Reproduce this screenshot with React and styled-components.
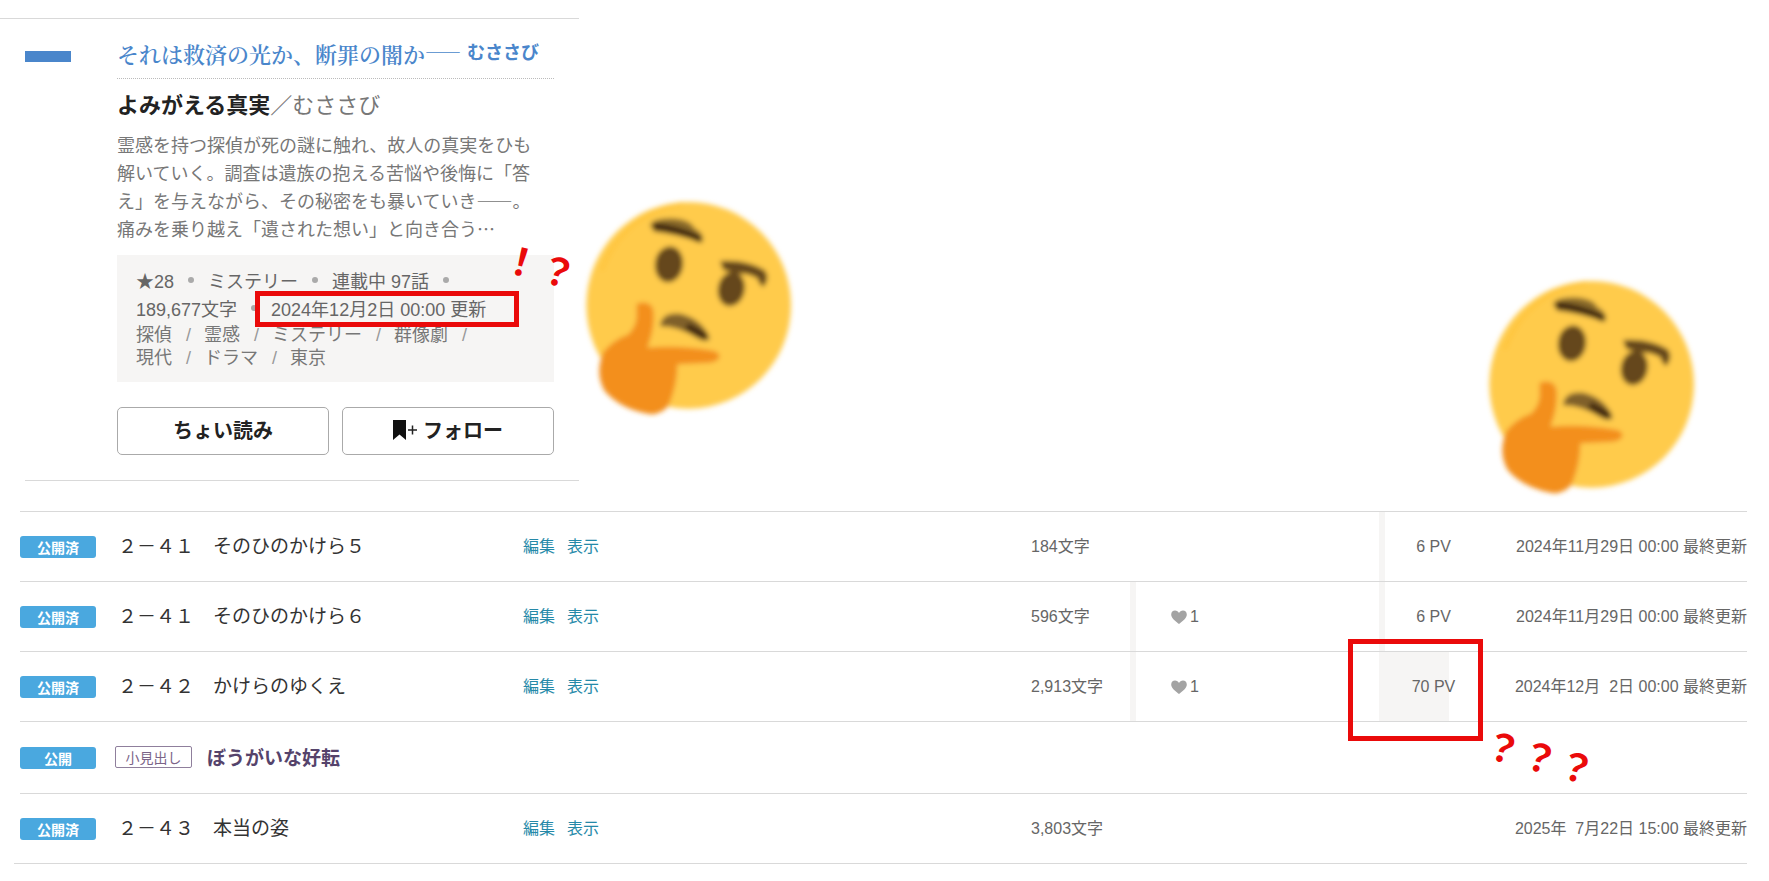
import React from "react";
import styled, { createGlobalStyle } from "styled-components";

const gothic = `"Noto Sans CJK JP", sans-serif`;
const mixed = `"Liberation Sans", "Noto Sans CJK JP", sans-serif`;
const mincho = `"Noto Serif CJK JP", "Noto Sans CJK JP", serif`;
const red = "#ea0a0a";
const pale = "#f6f5f4";
const rule = "#d9d9d9";

const GlobalStyle = createGlobalStyle`
  *, *::before, *::after { box-sizing: border-box; }
  body { margin: 0; background: #fff; color: #666; font-family: ${mixed}; }
  a { text-decoration: none; }
`;

const Page = styled.main`
  padding: 18px 0;
  overflow: hidden;
`;

const Hero = styled.section`
  display: flex;
  align-items: flex-start;
  padding-right: 70px;
`;

const Card = styled.article`
  width: 579px;
  flex: none;
  border-top: 1px solid ${rule};
`;

const CardInner = styled.div`
  display: flex;
  margin-left: 25px;
  padding: 20px 25px 25px 0;
  border-bottom: 1px solid ${rule};
`;

const Mark = styled.div`
  flex: none;
  width: 46px;
  height: 11px;
  margin: 12px 46px 0 0;
  background: #4a86cb;
`;

const CardBody = styled.div`
  flex: 1;
  min-width: 0;
`;

const Catch = styled.div`
  display: flex;
  align-items: flex-start;
  padding-bottom: 9px;
  border-bottom: 1px dotted #bbb;
  white-space: nowrap;
`;

const CatchLink = styled.a`
  color: #4a86cb;
  font: 600 22px/30px ${mincho};
`;

const CatchAuthor = styled.a`
  display: flex;
  gap: 6px;
  color: #4a86cb;
  font: 700 18px/24px ${gothic};
`;

const Dash = styled.span`
  font-weight: 400;
`;

const Title = styled.h1`
  margin: 9px 0 12px;
  font: 400 22px/30px ${gothic};
`;

const TitleLink = styled.a`
  color: #222;
  font-weight: 700;
`;

const AuthorLink = styled.a`
  color: #777;
`;

const Intro = styled.p`
  margin: 0 0 13px;
  padding-right: 20px;
  color: #777;
  font: 400 18px/28px ${gothic};
`;

const Meta = styled.div`
  position: relative;
  padding: 11px 19px 12px;
  background: ${pale};
  font-size: 18px;
`;

const MetaLine = styled.div`
  display: flex;
  align-items: center;
  height: 28px;
  white-space: nowrap;
`;

const Dot = styled.span`
  width: 6px;
  height: 6px;
  margin: 0 14px;
  border-radius: 50%;
  background: #aaa;
`;

const Marked = styled.span`
  position: relative;
  &::after {
    content: "";
    position: absolute;
    inset: -4px -33px -6px -16px;
    border: 5px solid ${red};
  }
`;

const Tags = styled.ul`
  display: flex;
  flex-wrap: wrap;
  margin: 2px 0 0;
  padding: 0 40px 0 0;
  list-style: none;
  line-height: 23px;
`;

const Tag = styled.li`
  &:not(:last-child)::after {
    content: "/";
    margin: 0 13px 0 14px;
    color: #999;
  }
`;

const TagLink = styled.a`
  color: #777;
`;

const Shout = styled.span`
  position: absolute;
  left: ${(p) => p.$left}px;
  top: ${(p) => p.$top}px;
  color: ${red};
  font: 700 38px/38px ${gothic};
  white-space: nowrap;
  transform: rotate(15deg);
`;

const Actions = styled.div`
  display: flex;
  gap: 13px;
  margin-top: 25px;
`;

const Button = styled.button`
  flex: 1;
  display: flex;
  align-items: center;
  justify-content: center;
  gap: 6px;
  height: 48px;
  padding: 0 0 2px;
  border: 1px solid #aaa;
  border-radius: 5px;
  background: #fff;
  color: #222;
  font: 700 20px/28px ${gothic};
`;

const Emoji = styled.svg`
  flex: none;
  width: 216px;
  height: 224px;
  margin: ${(p) => p.$margin};
`;

const Table = styled.table`
  width: calc(100% - 42px);
  margin: 11px 22px 0 20px;
  table-layout: fixed;
  border-collapse: separate;
  border-spacing: 0;
  font-size: 16px;
  line-height: 22px;
`;

const Col = styled.col`
  width: ${(p) => p.$w};
`;

const Row = styled.tr`
  height: ${(p) => (p.$tall ? 72 : 70)}px;
`;

const Cell = styled.td`
  position: relative;
  padding: 0;
  border-top: 1px solid ${rule};
  text-align: ${(p) => p.$align || "left"};
  white-space: nowrap;
`;

const BarCell = styled(Cell)`
  background: linear-gradient(${pale}, ${pale}) no-repeat;
  background-size: ${(p) => p.$bar || 0}px 100%;
`;

const RedBox = styled.span`
  position: absolute;
  z-index: 1;
  inset: -13px 5px -20px -31px;
  border: 5px solid ${red};
`;

const Status = styled.span`
  display: block;
  width: 76px;
  border-radius: 3px;
  background: #4aa8df;
  color: #fff;
  font: 700 14px/22px ${gothic};
  text-align: center;
`;

const Episode = styled.span`
  display: block;
  padding: 0 0 4px 3px;
  color: #333;
  font: 400 19px/28px ${gothic};
`;

const Heading = styled.div`
  display: flex;
  align-items: center;
  gap: 15px;
  padding-bottom: 2px;
  color: #55436b;
  font: 700 19px/28px ${gothic};
`;

const HeadingTag = styled.span`
  width: 77px;
  border: 1px solid #8f7f9c;
  border-radius: 2px;
  color: #7b6488;
  font: 400 14px/20px ${gothic};
  text-align: center;
`;

const Links = styled.div`
  display: flex;
  gap: 12px;
`;

const EditLink = styled.a`
  color: #2589a8;
`;

const Likes = styled.span`
  display: flex;
  align-items: center;
  gap: 3px;
  padding-left: 41px;
`;

const EndRule = styled.hr`
  height: 1px;
  margin: 0 22px 0 14px;
  border: 0;
  background: ${rule};
`;

function ThinkingFace({ id, margin }) {
  return (
    <Emoji $margin={margin} viewBox="30 20 648 672" role="img" aria-label="考える顔">
      <defs>
        <filter id={id} x="-5%" y="-5%" width="110%" height="110%">
          <feGaussianBlur stdDeviation="8" />
        </filter>
      </defs>
      <g filter={`url(#${id})`}>
        <ellipse cx="356" cy="345" rx="307" ry="310" fill="#ffcb4c" />
        <path d="M95 240 Q160 70 340 40" fill="none" stroke="#ffc43a" strokeWidth="10" />
        <path d="M240 104 Q250 84 300 84 Q360 86 372 112 Q408 132 396 158 Q330 134 252 124 Z" fill="#8a6a2c" />
        <path d="M250 108 Q320 112 392 148" fill="none" stroke="#3b240c" strokeWidth="20" />
        <ellipse cx="297" cy="222" rx="42" ry="54" transform="rotate(8 297 222)" fill="#65471b" />
        <ellipse cx="484" cy="296" rx="40" ry="52" transform="rotate(12 484 296)" fill="#65471b" />
        <path d="M450 212 Q530 206 584 240 Q602 262 580 290 Q568 284 562 264 Q540 250 516 250 L460 240 Z" fill="#65471b" />
        <path d="M270 408 Q274 364 332 370 Q400 388 420 446 Q406 458 382 444 Q328 408 270 408 Z" fill="#80602a" />
        <path d="M350 408 L410 440" fill="none" stroke="#3f2810" strokeWidth="22" />
        <path
          d="M200 340 Q242 328 250 360 Q256 410 232 472 Q330 464 420 480 Q452 484 448 502 Q440 518 400 518 L322 522 Q322 580 298 640 Q284 670 240 672 Q150 656 104 602 Q74 550 100 486 Q128 450 176 432 Q202 404 200 372 Z"
          fill="#f38f1d"
        />
      </g>
    </Emoji>
  );
}

function BookmarkPlus() {
  return (
    <svg width="24" height="20" viewBox="0 0 24 20" aria-hidden="true">
      <path d="M0 0h13v20l-6.500-5.500L0 20z" fill="#111" />
      <path d="M15 10h9M19.500 5.500v9" stroke="#222" strokeWidth="1.500" />
    </svg>
  );
}

function Heart() {
  return (
    <svg width="16" height="14" viewBox="0 0 16 14" aria-hidden="true">
      <path
        d="M8 14C5.500 12 1 9 .3 5.500C-.2 2.500 1.600.5 4 .5C5.800.5 7.300 1.500 8 3C8.700 1.500 10.200.5 12 .5C14.400.5 16.200 2.500 15.700 5.500C15 9 10.500 12 8 14z"
        fill="#a3a3a3"
      />
    </svg>
  );
}

const tags = ["探偵", "霊感", "ミステリー", "群像劇", "現代", "ドラマ", "東京"];

const rows = [
  { status: "公開済", title: "２－４１　そのひのかけら５", chars: "184文字", pv: "6 PV", pvBar: 6, date: "2024年11月29日 00:00 最終更新" },
  { status: "公開済", title: "２－４１　そのひのかけら６", chars: "596文字", likes: 1, pv: "6 PV", pvBar: 6, date: "2024年11月29日 00:00 最終更新" },
  { status: "公開済", title: "２－４２　かけらのゆくえ", chars: "2,913文字", likes: 1, pv: "70 PV", pvBar: 70, marked: true, date: "2024年12月\u00a0\u00a02日 00:00 最終更新" },
  { status: "公開", heading: "ぼうがいな好転" },
  { status: "公開済", title: "２－４３　本当の姿", chars: "3,803文字", date: "2025年\u00a0\u00a07月22日 15:00 最終更新" },
];

function EpisodeRow({ row }) {
  if (row.heading) {
    return (
      <Row $tall>
        <Cell><Status>{row.status}</Status></Cell>
        <Cell colSpan={6}>
          <Heading><HeadingTag>小見出し</HeadingTag>{row.heading}</Heading>
        </Cell>
      </Row>
    );
  }
  return (
    <Row>
      <Cell><Status>{row.status}</Status></Cell>
      <Cell><Episode>{row.title}</Episode></Cell>
      <Cell>
        <Links>
          <EditLink href="#edit">編集</EditLink>
          <EditLink href="#view">表示</EditLink>
        </Links>
      </Cell>
      <Cell>{row.chars}</Cell>
      <BarCell $bar={row.likes ? 6 : 0}>
        {row.likes && <Likes><Heart />{row.likes}</Likes>}
      </BarCell>
      <BarCell $align="center" $bar={row.pvBar}>
        {row.pv}
        {row.marked && <RedBox />}
        {row.marked && <Shout $left={104} $top={85}>？？？</Shout>}
      </BarCell>
      <Cell $align="right">{row.date}</Cell>
    </Row>
  );
}

export default function App() {
  return (
    <Page lang="ja">
      <GlobalStyle />
      <Hero>
        <Card>
          <CardInner>
            <Mark />
            <CardBody>
              <Catch>
                <CatchLink href="#work">それは救済の光か、断罪の闇か</CatchLink>
                <CatchAuthor href="#author"><Dash>――</Dash>むささび</CatchAuthor>
              </Catch>
              <Title>
                <TitleLink href="#work">よみがえる真実</TitleLink>
                <AuthorLink href="#author">／むささび</AuthorLink>
              </Title>
              <Intro>
                霊感を持つ探偵が死の謎に触れ、故人の真実をひも解いていく。調査は遺族の抱える苦悩や後悔に「答え」を与えながら、その秘密をも暴いていき――。痛みを乗り越え「遺された想い」と向き合う…
              </Intro>
              <Meta>
                <MetaLine>
                  ★28<Dot />ミステリー<Dot />連載中 97話<Dot />
                </MetaLine>
                <MetaLine>
                  189,677文字<Dot /><Marked>2024年12月2日 00:00 更新</Marked>
                </MetaLine>
                <Tags>
                  {tags.map((t) => (
                    <Tag key={t}><TagLink href="#tag">{t}</TagLink></Tag>
                  ))}
                </Tags>
                <Shout $left={385} $top={-9}>！？</Shout>
              </Meta>
              <Actions>
                <Button type="button">ちょい読み</Button>
                <Button type="button"><BookmarkPlus />フォロー</Button>
              </Actions>
            </CardBody>
          </CardInner>
        </Card>
        <ThinkingFace id="soft-a" margin="179px 0 0 1px" />
        <ThinkingFace id="soft-b" margin="258px 0 0 auto" />
      </Hero>
      <Table>
        <colgroup>
          <Col $w="95px" />
          <Col $w="408px" />
          <Col $w="auto" />
          <Col $w="99px" />
          <Col $w="249px" />
          <Col $w="109px" />
          <Col $w="259px" />
        </colgroup>
        <tbody>
          {rows.map((row, i) => <EpisodeRow key={i} row={row} />)}
        </tbody>
      </Table>
      <EndRule />
    </Page>
  );
}
